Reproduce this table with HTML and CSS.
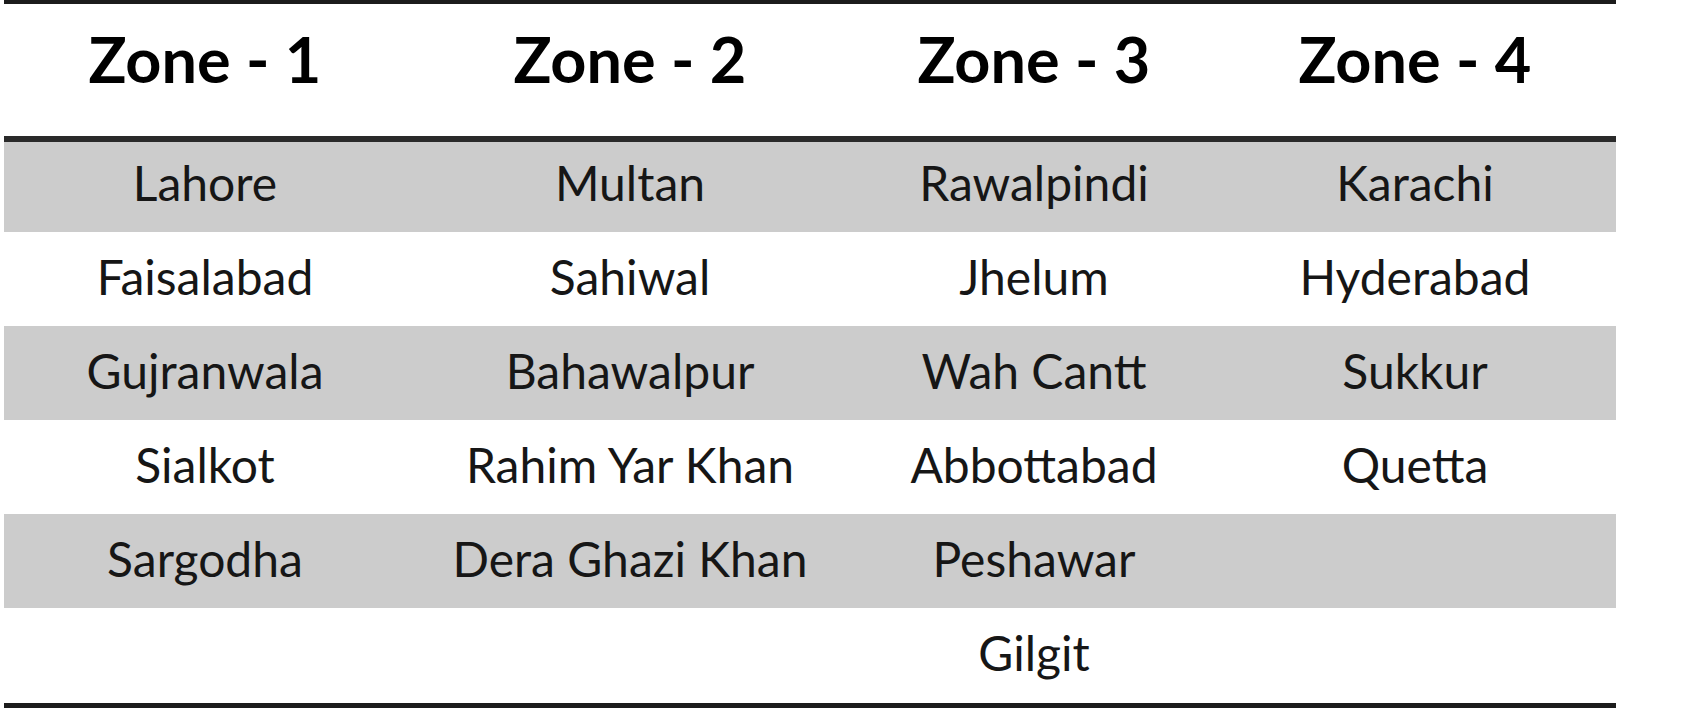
FILE: index.html
```html
<!DOCTYPE html>
<html lang="en">
<head>
<meta charset="utf-8">
<title>Zones</title>
<link rel="stylesheet" href="styles.css">
</head>
<body>
<div class="zones">
  <div class="row head">
    <div class="cell c1">Zone - 1</div>
    <div class="cell c2">Zone - 2</div>
    <div class="cell c3">Zone - 3</div>
    <div class="cell c4">Zone - 4</div>
  </div>
  <div class="row band first">
    <div class="cell c1">Lahore</div>
    <div class="cell c2">Multan</div>
    <div class="cell c3">Rawalpindi</div>
    <div class="cell c4">Karachi</div>
  </div>
  <div class="row">
    <div class="cell c1">Faisalabad</div>
    <div class="cell c2">Sahiwal</div>
    <div class="cell c3">Jhelum</div>
    <div class="cell c4">Hyderabad</div>
  </div>
  <div class="row band">
    <div class="cell c1">Gujranwala</div>
    <div class="cell c2">Bahawalpur</div>
    <div class="cell c3">Wah Cantt</div>
    <div class="cell c4">Sukkur</div>
  </div>
  <div class="row">
    <div class="cell c1">Sialkot</div>
    <div class="cell c2">Rahim Yar Khan</div>
    <div class="cell c3">Abbottabad</div>
    <div class="cell c4">Quetta</div>
  </div>
  <div class="row band">
    <div class="cell c1">Sargodha</div>
    <div class="cell c2">Dera Ghazi Khan</div>
    <div class="cell c3">Peshawar</div>
    <div class="cell c4"></div>
  </div>
  <div class="row last">
    <div class="cell c1"></div>
    <div class="cell c2"></div>
    <div class="cell c3">Gilgit</div>
    <div class="cell c4"></div>
  </div>
</div>
</body>
</html>
```
FILE: styles.css
```css
html, body {
  margin: 0;
  padding: 0;
  background: #ffffff;
}

body {
  font-family: Lato, "Open Sans", sans-serif;
  color: #161616;
}

.zones {
  width: 1612px;
  margin-left: 4px;
  border-top: 4px solid #1c1c1c;
  border-bottom: 5px solid #1c1c1c;
}

.row {
  display: flex;
  align-items: flex-start;
  box-sizing: border-box;
  height: 94px;
  padding-top: 16px;
  font-size: 48px;
  line-height: normal;
}

.row.first {
  height: 90px;
  padding-top: 12px;
}

.row.last {
  height: 95px;
}

.row.band {
  background: #cccccc;
}

.row.head {
  height: 138px;
  padding-top: 17px;
  border-bottom: 6px solid #2a2a2a;
  font-size: 63px;
  font-weight: 700;
  color: #000000;
}

.cell {
  text-align: center;
  white-space: nowrap;
}

.c1 { width: 402px; }
.c2 { width: 448px; }
.c3 { width: 360px; }
.c4 { width: 402px; }
```
